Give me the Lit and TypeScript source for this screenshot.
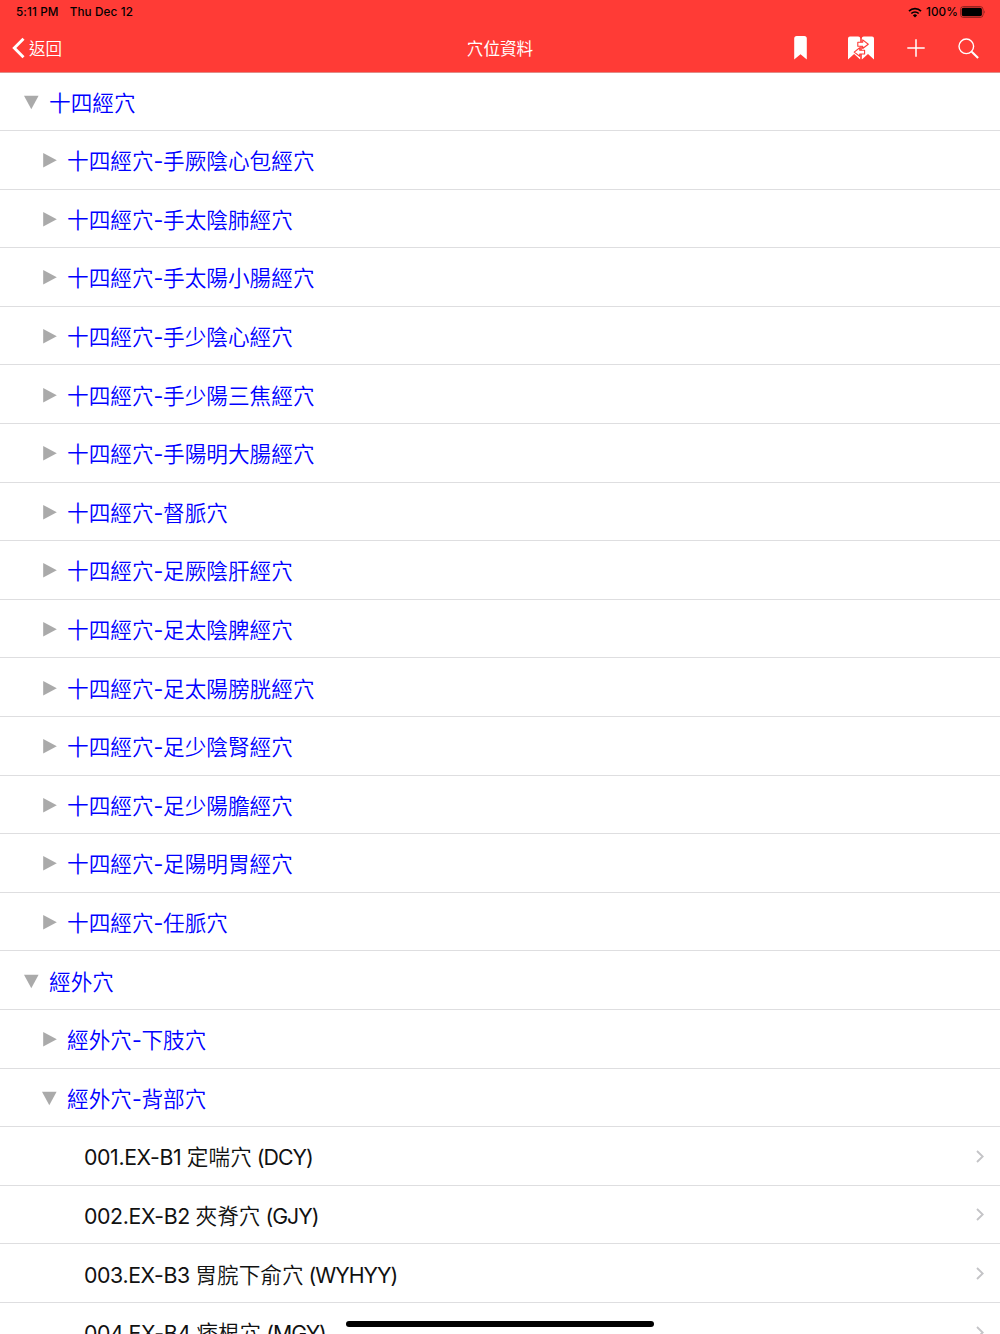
import { LitElement, html, css, svg } from "lit";
import { customElement, property } from "lit/decorators.js";

type Kind = "open" | "closed" | "leaf";
interface Row { level: number; kind: Kind; text: string; }

const MERIDIANS = [
  "手厥陰心包經穴", "手太陰肺經穴", "手太陽小腸經穴", "手少陰心經穴",
  "手少陽三焦經穴", "手陽明大腸經穴", "督脈穴", "足厥陰肝經穴",
  "足太陰脾經穴", "足太陽膀胱經穴", "足少陰腎經穴", "足少陽膽經穴",
  "足陽明胃經穴", "任脈穴",
];

const ROWS: Row[] = [
  { level: 0, kind: "open", text: "十四經穴" },
  ...MERIDIANS.map((m): Row => ({ level: 1, kind: "closed", text: `十四經穴-${m}` })),
  { level: 0, kind: "open", text: "經外穴" },
  { level: 1, kind: "closed", text: "經外穴-下肢穴" },
  { level: 1, kind: "open", text: "經外穴-背部穴" },
  { level: 2, kind: "leaf", text: "001.EX-B1 定喘穴 (DCY)" },
  { level: 2, kind: "leaf", text: "002.EX-B2 夾脊穴 (GJY)" },
  { level: 2, kind: "leaf", text: "003.EX-B3 胃脘下俞穴 (WYHYY)" },
  { level: 2, kind: "leaf", text: "004.EX-B4 痞根穴 (MGY)" },
];

@customElement("status-bar")
class StatusBar extends LitElement {
  static styles = css`
    :host { display: flex; height: 24px; align-items: center; justify-content: space-between;
      padding: 0 14px 0 16px; font: 500 11.7px/24px Inter, sans-serif; letter-spacing: 0.13px; color: #000; }
    .group { display: flex; align-items: center; white-space: pre; }
    .date { margin-left: 11px; }
    .pct { margin: 0 2px 0 4px; }
    svg { display: block; }
  `;
  render() {
    return html`
      <div class="group"><span>5:11 PM</span><span class="date">Thu Dec 12</span></div>
      <div class="group">
        <svg width="14" height="11" viewBox="0 0 14 11">
          <path d="M1 4.1a8.6 8.6 0 0 1 12 0" fill="none" stroke="#000" stroke-width="1.8"/>
          <path d="M3.3 6.5a5.3 5.3 0 0 1 7.4 0" fill="none" stroke="#000" stroke-width="1.7"/>
          <path d="M7 10.6 4.9 8.4a3 3 0 0 1 4.2 0z"/>
        </svg>
        <span class="pct">100%</span>
        <svg width="26" height="12" viewBox="0 0 26 12">
          <rect x=".5" y=".5" width="22.6" height="11" rx="3" fill="none" stroke="#000" stroke-opacity=".4"/>
          <rect x="1.7" y="1.7" width="20.2" height="8.6" rx="1.8"/>
          <path d="M24.1 4.2q1.5 1.8 0 3.6z" fill-opacity=".5"/>
        </svg>
      </div>`;
  }
}

@customElement("nav-bar")
class NavBar extends LitElement {
  static styles = css`
    :host { display: grid; grid-template-columns: 1fr auto 1fr; height: 48px; align-items: center;
      color: #fff; font: 400 16.6px/48px "Noto Sans CJK TC", sans-serif; }
    .back { display: flex; align-items: center; padding-left: 12px; gap: 4px; font-weight: 350; font-size: 16.5px; }
    .back span { line-height: 46px; padding-bottom: 1px; }
    .title { font-weight: 400; }
    .actions { display: flex; align-items: center; justify-content: flex-end; padding-right: 21px; }
    svg { display: block; }
    .mark { margin-right: 41px; }
    .swap { margin-right: 33px; }
    .plus { margin-right: 33px; }
  `;
  render() {
    return html`
      <div class="back">
        <svg width="13" height="22" viewBox="0 0 13 22"><path d="M11.5 1.7 2.3 11l9.2 9.3" fill="none" stroke="#fff" stroke-width="2.9"/></svg>
        <span>返回</span>
      </div>
      <div class="title">穴位資料</div>
      <div class="actions">
        <svg class="mark" width="13" height="24" viewBox="0 0 13 24"><path d="M.2 23.6V2.5Q.2 0 2.7 0h7.6q2.5 0 2.5 2.5v21.1l-6.3-5.4z" fill="#fff"/></svg>
        <svg class="swap" width="26" height="24" viewBox="0 0 26 24">
          <path d="M0 23.5V2.5Q0 .5 2 .5h8.2q2 0 2 2v21L6.1 18z M13.8 23.5v-21q0-2 2-2H24q2 0 2 2v21L20 18z" fill="#fff"/>
          <g fill="#fff" stroke="#ff3b36" stroke-width="1.1" stroke-linejoin="round">
            <path d="M9.8 6.2h4.9V3.9l5.6 4.3-5.6 4.3v-2.3H9.8z"/>
            <path d="M16.6 14.2h-4.9v-2.4l-5.5 4.3 5.5 4.2V18h4.9z"/>
          </g>
        </svg>
        <svg class="plus" width="18" height="18" viewBox="0 0 18 18"><path d="M9 .3v17.4M.3 9h17.4" stroke="#fff" stroke-width="1.5"/></svg>
        <svg width="21" height="21" viewBox="0 0 21 21"><circle cx="8.3" cy="8.3" r="7.3" fill="none" stroke="#fff" stroke-width="1.4"/><path d="m13.7 13.7 6.4 6.2" stroke="#fff" stroke-width="2.1"/></svg>
      </div>`;
  }
}

@customElement("tree-row")
class TreeRow extends LitElement {
  @property({ attribute: false }) row!: Row;
  static styles = css`
    :host { display: block; }
    .row { box-sizing: border-box; height: 58.6px; display: flex; align-items: center;
      border-bottom: 1px solid #dedee0; font: 400 21.65px/32px "Noto Sans CJK TC", sans-serif;
      color: #00f; white-space: pre; }
    .l0 { padding-left: 24px; }
    .l1 { padding-left: 42px; }
    .l2 { padding: 0 16px 0 84px; color: #111; justify-content: space-between; }
    .arrow { flex: none; width: 15px; height: 15px; margin: 2px 10px 0 0; fill: #aaa; }
    .label { padding-top: 2px; }
    .cjk { font-weight: 350; }
    .latin { font-family: Inter, sans-serif; font-size: 21.3px; letter-spacing: -0.38px; }
    .cjk + .latin { letter-spacing: -1px; }
    .l1 .cjk + .latin { letter-spacing: -0.3px; }
    .chevron { width: 8px; height: 13px; margin-top: 1px; fill: none; stroke: #c4c4c7; stroke-width: 1.9; }
  `;
  render() {
    const { level, kind, text } = this.row;
    const cjk = /[\u4e00-\u9fff]/;
    const label = text
      .split(/([\u4e00-\u9fff]+)/)
      .filter(Boolean)
      .map((p) => html`<span class=${cjk.test(p) ? "cjk" : "latin"}>${p}</span>`);
    const arrow = html`<svg class="arrow" viewBox="0 0 15 15">${kind === "open"
      ? svg`<path d="M0 .8h14.6L7.3 14.2z"/>`
      : svg`<path d="M1.2 0v14.4L14.8 7.2z"/>`}</svg>`;
    const chevron = html`<svg class="chevron" viewBox="0 0 8 13"><path d="m1 1 5.7 5.5L1 12"/></svg>`;
    return html`<div class="row l${level}">${kind === "leaf" ? "" : arrow}<span class="label">${label}</span>${kind === "leaf" ? chevron : ""}</div>`;
  }
}

@customElement("app-root")
class AppRoot extends LitElement {
  static styles = css`
    :host { display: block; position: relative; width: 1000px; height: 1334px; overflow: hidden; background: #fff; }
    .header { box-sizing: border-box; height: 73px; margin-bottom: -0.6px; background: #ff3b36; border-bottom: 1px solid #e08d88; }
    .home { position: absolute; left: 346px; bottom: 7.5px; width: 308px; height: 5.5px; border-radius: 3px; background: #000; }
  `;
  render() {
    return html`
      <div class="header"><status-bar></status-bar><nav-bar></nav-bar></div>
      <div class="list">${ROWS.map((r) => html`<tree-row .row=${r}></tree-row>`)}</div>
      <div class="home"></div>`;
  }
}
